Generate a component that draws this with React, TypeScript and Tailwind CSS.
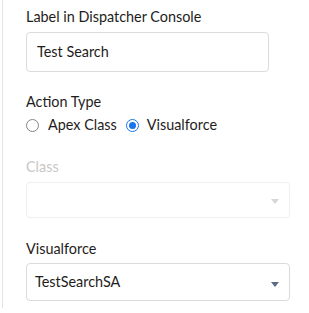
import { useState } from "react";

function Caret({ color }: { color: string }) {
    return (
        <svg width="8" height="5" viewBox="0 0 8 5" className="shrink-0">
            <path d="M0 0 L8 0 L4 5 Z" fill={color} />
        </svg>
    );
}

export default function App() {
    const [type, setType] = useState<"apex" | "vf">("vf");

    return (
        <div className="w-[309px] h-[313px] bg-white font-['Lato','Liberation_Sans',sans-serif] text-[#1f1d1b]">
            <div className="ml-[2px] h-[308px] border-l border-[#e3e3e3] pl-[23px] pt-[7px]">
                {/* Label */}
                <div className="text-[14.4px] leading-[20px]">Label in Dispatcher Console</div>
                <div className="mt-[5px] w-[243px] h-[40px] rounded-[4px] border border-[#dddbda] flex items-center pl-[10px] text-[14.4px]">
                    Test Search
                </div>

                {/* Action type */}
                <div className="mt-[20px] text-[14.4px] leading-[20px]">Action Type</div>
                <div className="mt-[3px] h-[20px] flex items-center text-[14.4px]">
                    <label className="flex items-center cursor-pointer">
                        <span
                            className="w-[13px] h-[13px] rounded-full border border-[#858585] flex items-center justify-center"
                            onClick={() => setType("apex")}
                        >
                            {type === "apex" && <span className="w-[7px] h-[7px] rounded-full bg-[#1a73e8]" />}
                        </span>
                        <span className="ml-[9px]">Apex Class</span>
                    </label>
                    <label className="flex items-center ml-[9px] cursor-pointer">
                        <span
                            className={
                                type === "vf"
                                    ? "w-[13px] h-[13px] rounded-full border-[1.5px] border-[#1a73e8] flex items-center justify-center"
                                    : "w-[13px] h-[13px] rounded-full border border-[#858585] flex items-center justify-center"
                            }
                            onClick={() => setType("vf")}
                        >
                            {type === "vf" && <span className="w-[7px] h-[7px] rounded-full bg-[#1a73e8]" />}
                        </span>
                        <span className="ml-[8px]">Visualforce</span>
                    </label>
                </div>

                {/* Class (disabled) */}
                <div className="mt-[22px] text-[14.4px] leading-[20px] text-[#c9c7c5]">Class</div>
                <div className="mt-[5px] w-[264px] h-[36px] rounded-[4px] border border-[#f0efee] flex items-center justify-end pr-[10px]">
                    <div className="mt-[2px]">
                        <Caret color="#d4d7dd" />
                    </div>
                </div>

                {/* Visualforce */}
                <div className="mt-[21px] text-[14.4px] leading-[20px]">Visualforce</div>
                <div className="mt-[4px] w-[264px] h-[38px] rounded-[4px] border border-[#dddbda] flex items-center justify-between pl-[8px] pr-[10px] text-[14.4px]">
                    <span>TestSearchSA</span>
                    <div className="mt-[4px]">
                        <Caret color="#5c6b85" />
                    </div>
                </div>
            </div>
        </div>
    );
}
